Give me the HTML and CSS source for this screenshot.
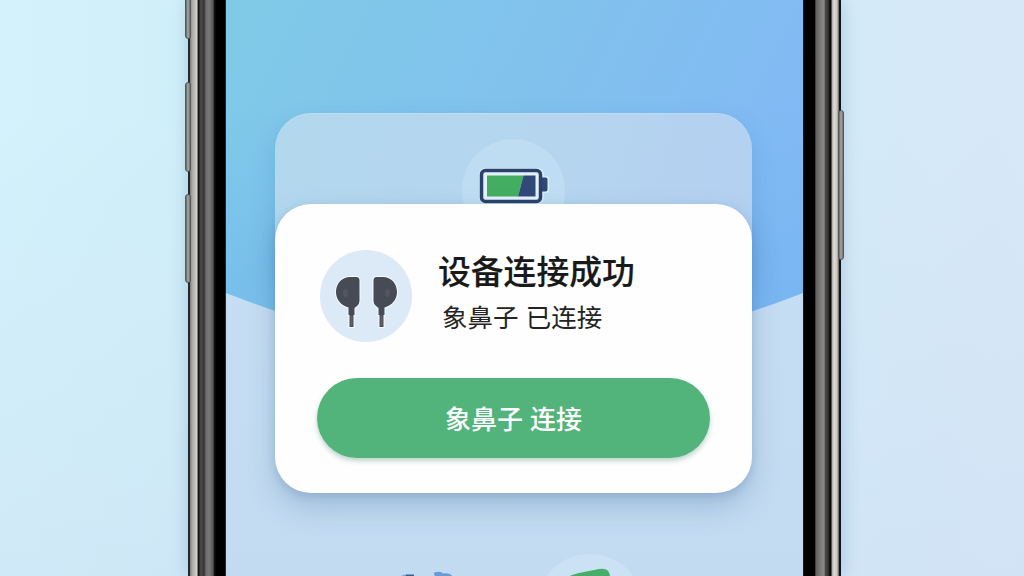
FILE: index.html
```html
<!DOCTYPE html>
<html lang="zh-CN">
<head>
<meta charset="utf-8">
<title>设备连接成功</title>
<link rel="stylesheet" href="styles.css">
</head>
<body>
<main class="scene">
  <div class="phone">
    <div class="rail rail-left">
      <i class="key key-silent"></i><i class="key key-up"></i><i class="key key-down"></i>
    </div>
    <section class="screen">
      <svg class="wallpaper" viewBox="0 0 577 576" aria-hidden="true">
        <defs>
          <linearGradient id="sky" gradientUnits="userSpaceOnUse" x1="40" y1="-20" x2="560" y2="240">
            <stop offset="0" stop-color="#80cae8"/><stop offset=".5" stop-color="#81c1ed"/><stop offset="1" stop-color="#82b9f5"/>
          </linearGradient>
          <linearGradient id="depth" x1="0" y1="0" x2="0" y2="1">
            <stop offset=".3" stop-color="#64b0ec" stop-opacity="0"/><stop offset="1" stop-color="#64b0ec" stop-opacity=".4"/>
          </linearGradient>
          <linearGradient id="ground" x1="0" y1="0" x2="0" y2="1">
            <stop offset="0" stop-color="#c9e0f4"/><stop offset="1" stop-color="#c2dbf1"/>
          </linearGradient>
        </defs>
        <rect width="577" height="576" fill="url(#ground)"/>
        <path d="M0 0H577V293Q530 311 490 323Q288 370 87 323Q47 311 0 293Z" fill="url(#sky)"/>
        <path d="M0 0H577V293Q530 311 490 323Q288 370 87 323Q47 311 0 293Z" fill="url(#depth)"/>
      </svg>
      <div class="stack">
        <div class="battery-card">
          <div class="battery-disc">
            <svg class="battery" viewBox="0 0 72 38" aria-hidden="true">
              <rect x="1" y="1" width="65" height="36" rx="7" fill="#dcedf9"/>
              <rect x="62" y="9" width="9" height="17" rx="3" fill="#dcedf9"/>
              <path d="M64 10.500h3.500q2 0 2 2v10q0 2-2 2H64z" fill="#2f4774"/>
              <rect x="3.500" y="3.500" width="59" height="31" rx="4" fill="#e3f1fb" stroke="#29416b" stroke-width="3.500"/>
              <path d="M9 8.500h36.500l-5.500 21H9z" fill="#43ad61"/>
              <path d="M45.500 8.500H57.500v21H40z" fill="#304977"/>
            </svg>
          </div>
        </div>
        <article class="dialog">
          <header class="device">
            <div class="device-icon">
              <svg class="buds" viewBox="0 0 92 92" aria-hidden="true">
                <g>
                  <path d="M30 27H36.500Q39.500 27 39.500 30.500V51Q39.500 54 37 56L34.500 58V65H33.500V77H29.500V65H28.500V57.500C21 55.500 16 49.500 16 42C16 33.500 22 27 30 27Z" fill="#464b55" stroke="#f6faff" stroke-width="2" paint-order="stroke"/>
                  <ellipse cx="25.500" cy="43" rx="2.500" ry="4" fill="#525660"/>
                  <path d="M31.500 66v10" stroke="#606166" stroke-width="2"/>
                </g>
                <g transform="matrix(-1 0 0 1 93 0)">
                  <path d="M30 27H36.500Q39.500 27 39.500 30.500V51Q39.500 54 37 56L34.500 58V65H33.500V77H29.500V65H28.500V57.500C21 55.500 16 49.500 16 42C16 33.500 22 27 30 27Z" fill="#464b55" stroke="#f6faff" stroke-width="2" paint-order="stroke"/>
                  <ellipse cx="25.500" cy="43" rx="2.500" ry="4" fill="#525660"/>
                  <path d="M31.500 66v10" stroke="#606166" stroke-width="2"/>
                </g>
              </svg>
            </div>
            <div class="device-text">
              <h1 class="title">设备连接成功</h1>
              <p class="subtitle">象鼻子 已连接</p>
            </div>
          </header>
          <button class="connect" type="button">象鼻子 连接</button>
        </article>
      </div>
      <svg class="peek" viewBox="0 0 577 26" aria-hidden="true">
        <circle cx="364" cy="58" r="54" fill="#cbe2f4"/>
        <path d="M344 26q1-1 9-3l20-4q10-2 11 7z" fill="#48ad69"/>
        <path d="M175 26q4-3 9 0z" fill="#77a6d8"/>
        <path d="M180 26v-1.500h8V26z" fill="#385e98"/>
        <path d="M209 26q-3-4 2-4q4-1 6 1.500q7-1 9 2.500z" fill="#649bd8"/>
      </svg>
    </section>
    <div class="rail rail-right"><i class="key key-power"></i></div>
  </div>
</main>
</body>
</html>
```

FILE: styles.css
```css
* { box-sizing: border-box; }
body { margin: 0; font-family: "Noto Sans CJK SC", sans-serif; }
.scene {
  height: 576px;
  overflow: hidden;
  padding-left: 188px;
  background:
    linear-gradient(180deg, rgba(204,222,244,0) 20%, rgba(204,222,244,.45)),
    linear-gradient(90deg, #d3f2fb 0%, #d0eff9 18%, #d3eaf8 82%, #d7e8f7 100%);
}
.phone {
  width: 653px;
  height: 576px;
  display: grid;
  grid-template-columns: 38px 577px 38px;
  box-shadow: 0 0 16px rgba(82,126,158,.32);
}
.rail { position: relative; }
.rail-left {
  background: linear-gradient(90deg, #26292b 0 1.5px, #777 2px, #aaa8a6 4px, #c9c6c3 8px, #e4e2e0 9px, #161619 10px 11px, #494545 12px 14px, #343132 16px, #6d6c6c 18px, #7b7b7b 21px, #565656 25px, #111 26.5px, #000 28px 37px, #345769 38px);
}
.rail-right {
  background: linear-gradient(90deg, #203344 0, #000 1px 11.5px, #626061 13px, #7a7777 17px, #8b8888 21px, #4b4646 22.500px, #3c3737 25px, #080809 27px 28px, #aaa6a3 29px, #dedbd7 31px, #c9c5c1 34px, #777574 35.500px, #111416 36.500px 38px);
}
.key {
  position: absolute;
  left: -3px;
  width: 6px;
  border: 1px solid #55595a;
  border-radius: 3px;
  background: linear-gradient(90deg, #626464, #a8aaa8, #696a69);
}
.key-silent { top: -12px; height: 51px; }
.key-up { top: 82px; height: 90px; }
.key-down { top: 194px; height: 89px; }
.key-power { left: 35px; top: 110px; height: 150px; }
.screen {
  position: relative;
  height: 576px;
  overflow: hidden;
}
.wallpaper {
  position: absolute;
  inset: 0;
  width: 577px;
  height: 576px;
}
.stack {
  position: relative;
  width: 477px;
  margin: 113px 0 0 49px;
}
.battery-card {
  height: 180px;
  display: flex;
  justify-content: center;
  padding-top: 26px;
  border-radius: 36px;
  background: linear-gradient(105deg, #b2d8ed, #b5d5ef 55%, #b3d0f1);
  box-shadow: 0 10px 24px rgba(48,105,175,.2), inset 0 1px 1px rgba(210,235,250,.3);
}
.battery-disc {
  width: 103px;
  height: 103px;
  padding: 28px 0 0 16px;
  border-radius: 50%;
  background: #bfddf2;
}
.battery { display: block; width: 72px; height: 38px; }
.dialog {
  position: relative;
  height: 289px;
  margin-top: -89px;
  padding: 45px 42px 0;
  border-radius: 36px;
  background: #fefefe;
  box-shadow: 0 14px 28px rgba(65,105,155,.27), 0 3px 8px rgba(65,105,155,.2);
}
.device { display: flex; gap: 26px; padding-left: 3px; }
.device-icon {
  flex: none;
  width: 92px;
  height: 92px;
  margin-top: 1px;
  border-radius: 50%;
  background: #dce9f6;
}
.buds { display: block; width: 92px; height: 92px; }
.title {
  margin: 0;
  color: #191919;
  font-size: 32.8px;
  font-weight: 500;
  line-height: 42px;
  white-space: nowrap;
  -webkit-text-stroke: .15px #191919;
}
.subtitle {
  margin: 6px 0 0 4px;
  color: #242424;
  font-size: 25.5px;
  line-height: 38px;
  white-space: nowrap;
  word-spacing: 1.5px;
}
.connect {
  display: block;
  width: 393px;
  height: 80px;
  margin-top: 36px;
  padding: 0;
  border: 0;
  border-radius: 40px;
  background: #52b37b;
  box-shadow: 0 3px 5px rgba(48,125,105,.32);
  color: #fff;
  font-family: inherit;
  font-size: 26px;
  font-weight: 500;
  line-height: 80px;
  word-spacing: 1px;
}
.peek {
  position: absolute;
  left: 0;
  bottom: 0;
  width: 577px;
  height: 26px;
}
```
